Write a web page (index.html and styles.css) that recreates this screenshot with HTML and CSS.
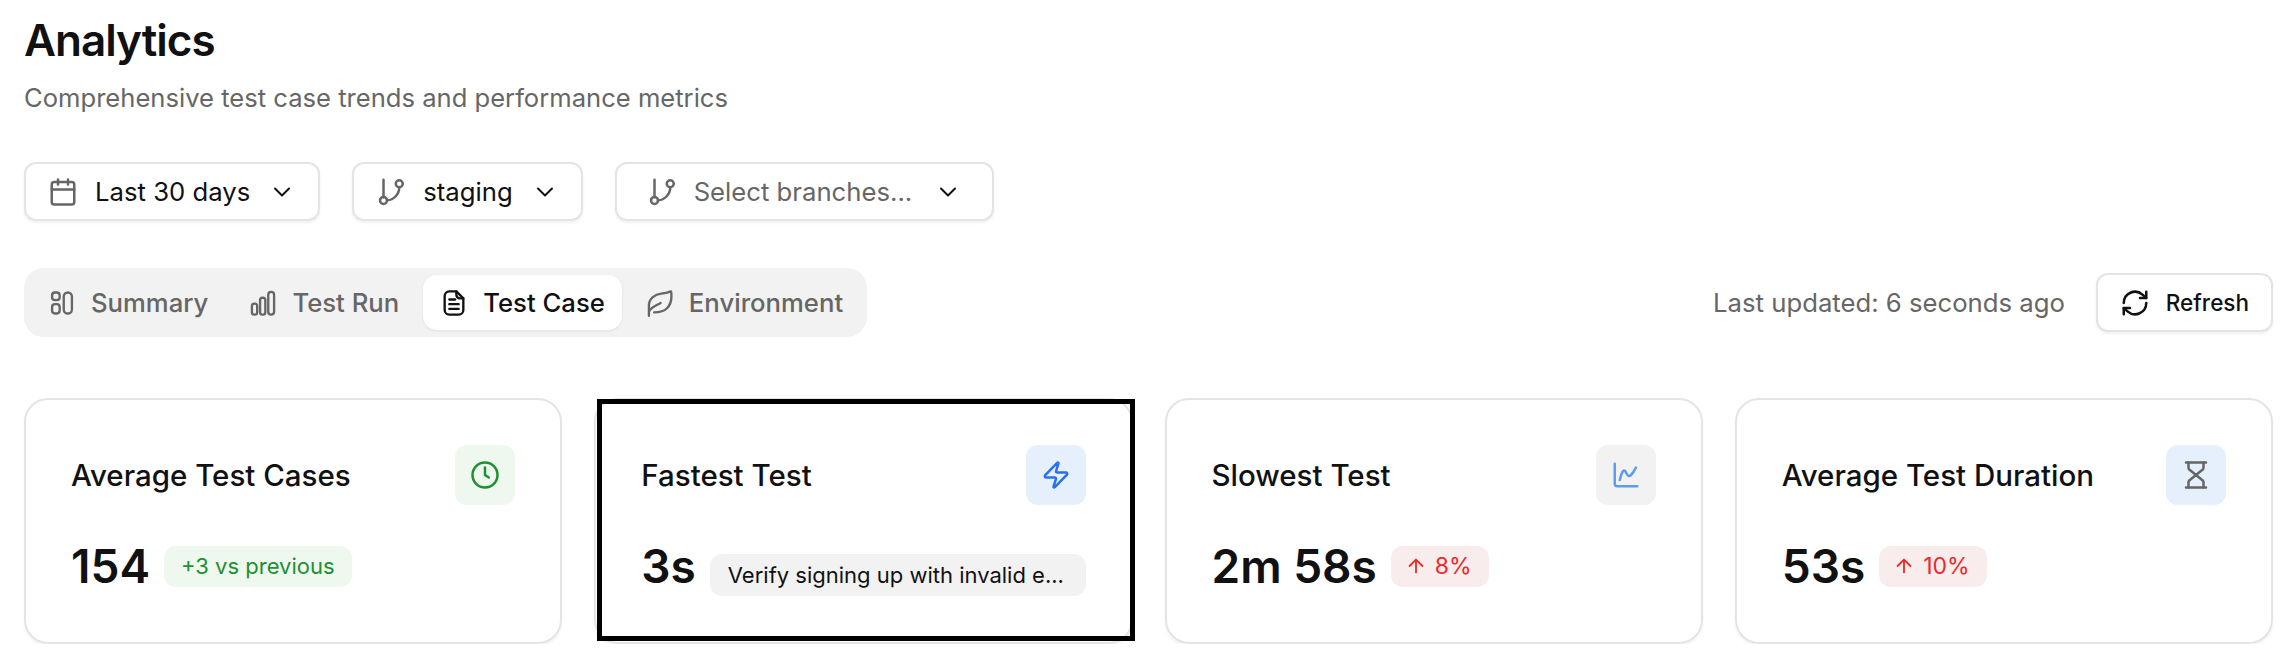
FILE: index.html
```html
<!DOCTYPE html>
<html lang="en">

<head>
  <meta charset="UTF-8">
  <meta name="viewport" content="width=device-width, initial-scale=1.0">
  <title>Analytics</title>
  <link rel="stylesheet" href="styles.css">
</head>

<body>
  <div class="page">
    <h1>Analytics</h1>
    <p class="subtitle">Comprehensive test case trends and performance metrics</p>

    <!-- Filters -->
    <div class="filters">
      <button class="dropdown">
        <svg class="icon muted" viewBox="0 0 24 24"><path d="M8 2v4M16 2v4"/><rect x="3" y="4" width="18" height="18" rx="2"/><path d="M3 10h18"/></svg>
        <span>Last 30 days</span>
        <svg class="chevron" viewBox="0 0 24 24"><path d="m5 8.500 7 7 7-7"/></svg>
      </button>
      <button class="dropdown">
        <svg class="icon muted" viewBox="0 0 24 24"><path d="M6 2.200v14"/><circle cx="6" cy="18.700" r="2.800"/><circle cx="18.600" cy="5.400" r="2.800"/><path d="M18.600 8.200a10.500 10.500 0 0 1-9.800 10.500"/></svg>
        <span>staging</span>
        <svg class="chevron" viewBox="0 0 24 24"><path d="m5 8.500 7 7 7-7"/></svg>
      </button>
      <button class="dropdown placeholder">
        <svg class="icon muted" viewBox="0 0 24 24"><path d="M6 2.200v14"/><circle cx="6" cy="18.700" r="2.800"/><circle cx="18.600" cy="5.400" r="2.800"/><path d="M18.600 8.200a10.500 10.500 0 0 1-9.800 10.500"/></svg>
        <span>Select branches...</span>
        <svg class="chevron" viewBox="0 0 24 24"><path d="m5 8.500 7 7 7-7"/></svg>
      </button>
    </div>

    <!-- Tabs -->
    <div class="toolbar">
      <div class="tabs">
        <div class="tab">
          <svg class="icon" viewBox="0 0 24 24"><rect x="3.500" y="3" width="6.500" height="6.500" rx="2.500"/><rect x="3.500" y="13" width="6.500" height="8" rx="2.500"/><rect x="13.500" y="3" width="7" height="18" rx="3.500"/></svg>
          Summary
        </div>
        <div class="tab">
          <svg class="icon" viewBox="0 0 24 24"><rect x="2.500" y="12.500" width="4.500" height="9.500" rx="2"/><rect x="9.500" y="7.500" width="4.500" height="14.500" rx="2"/><rect x="16.500" y="2.500" width="5" height="19.500" rx="2.500"/></svg>
          Test Run
        </div>
        <div class="tab active">
          <svg class="icon" viewBox="0 0 24 24"><path d="M14 2H8a4 4 0 0 0-4 4v12a4 4 0 0 0 4 4h8a4 4 0 0 0 4-4V8z"/><path d="M14 2v3a3 3 0 0 0 3 3h3M8 9h5M8 13h8M8 17h8"/></svg>
          Test Case
        </div>
        <div class="tab">
          <svg class="icon" viewBox="0 0 24 24"><path d="M2.500 23V14C2.500 8 8 4.500 13 4c3-.5 6-1 8.500-2 1 6.500-.5 11.500-3.500 14.500-3 3-7 3.500-11 3.500"/><path d="M3 18.500c2-3 6-4.500 9.500-6.500"/></svg>
          Environment
        </div>
      </div>
      <div class="update">
        <span class="updated">Last updated: 6 seconds ago</span>
        <button class="refresh">
          <svg class="icon dark" viewBox="0 0 24 24"><path d="M3 12a9 9 0 0 1 15-6.700L21 8"/><path d="M21 3v5h-5"/><path d="M21 12a9 9 0 0 1-15 6.700L3 16"/><path d="M8 16H3v5"/></svg>
          Refresh
        </button>
      </div>
    </div>

    <!-- Metric cards -->
    <div class="cards">
      <div class="card">
        <div class="card-head">
          <span class="card-title">Average Test Cases</span>
          <span class="tile green">
            <svg viewBox="0 0 24 24"><circle cx="12" cy="12" r="10"/><path d="M12 6v6l3 2"/></svg>
          </span>
        </div>
        <div class="card-value">
          <span class="value">154</span>
          <span class="badge good">+3 vs previous</span>
        </div>
      </div>

      <div class="card">
        <div class="card-head">
          <span class="card-title">Fastest Test</span>
          <span class="tile blue">
            <svg viewBox="0 0 24 24"><path d="M4 14a1 1 0 0 1-.78-1.630l9.900-10.200a.5.5 0 0 1 .86.46l-1.920 6.020A1 1 0 0 0 13 10h7a1 1 0 0 1 .78 1.630l-9.900 10.200a.5.5 0 0 1-.86-.46l1.920-6.020A1 1 0 0 0 11 14z"/></svg>
          </span>
        </div>
        <div class="card-value">
          <span class="value">3s</span>
          <span class="test-name">Verify signing up with invalid e...</span>
        </div>
        <div class="highlight"></div>
      </div>

      <div class="card">
        <div class="card-head">
          <span class="card-title">Slowest Test</span>
          <span class="tile gray">
            <svg class="light-blue" viewBox="0 0 24 24"><path d="M3 3v16a2 2 0 0 0 2 2h16"/><path d="M7 16c2-8 3.500-9 5-6s2.500 3.500 4 2 2.500-3 4-6"/></svg>
          </span>
        </div>
        <div class="card-value">
          <span class="value">2m 58s</span>
          <span class="badge bad">
            <svg viewBox="0 0 24 24"><path d="m5 12 7-7 7 7M12 19V5"/></svg>
            8%
          </span>
        </div>
      </div>

      <div class="card">
        <div class="card-head">
          <span class="card-title">Average Test Duration</span>
          <span class="tile blue">
            <svg class="gray-line" viewBox="0 0 24 24"><path d="M4 22h16M4 2h16"/><path d="M18 22v-4.200a2 2 0 0 0-.6-1.400L12 12l-5.400 4.400a2 2 0 0 0-.6 1.400V22"/><path d="M6 2v4.200a2 2 0 0 0 .6 1.400L12 12l5.400-4.400a2 2 0 0 0 .6-1.400V2"/></svg>
          </span>
        </div>
        <div class="card-value">
          <span class="value">53s</span>
          <span class="badge bad">
            <svg viewBox="0 0 24 24"><path d="m5 12 7-7 7 7M12 19V5"/></svg>
            10%
          </span>
        </div>
      </div>
    </div>
  </div>
</body>

</html>
```

FILE: styles.css
```css
* {
  box-sizing: border-box;
}

body {
  margin: 0;
  background: #fff;
  color: #111;
  font-family: Inter, "Liberation Sans", sans-serif;
}

svg {
  fill: none;
  stroke: currentColor;
  stroke-width: 2;
  stroke-linecap: round;
  stroke-linejoin: round;
  flex-shrink: 0;
}

.page {
  padding: 10px 23px 0 24px;
}

h1 {
  margin: 0;
  font-size: 44px;
  line-height: 60px;
  font-weight: 600;
  letter-spacing: -1px;
}

.subtitle {
  margin: 10px 0 0;
  font-size: 25.6px;
  line-height: 36px;
  color: #666;
}

.filters {
  display: flex;
  gap: 32px;
  margin-top: 46px;
}

.dropdown {
  display: flex;
  align-items: center;
  height: 59px;
  padding: 0 24px 0 22px;
  background: #fff;
  border: 2px solid #e4e4e4;
  border-radius: 12px;
  box-shadow: 0 2px 3px rgba(0, 0, 0, 0.06);
  font: inherit;
  font-size: 25.7px;
  color: #111;
}

.dropdown .icon {
  margin-right: 17px;
}

.dropdown .chevron {
  width: 24px;
  height: 24px;
  margin-left: 20px;
}

.placeholder {
  padding: 0 32px 0 30px;
  color: #666;
}

.placeholder .chevron {
  margin-left: 24px;
  color: #111;
}

.icon {
  width: 30px;
  height: 30px;
}

.muted {
  color: #666;
}

.toolbar {
  display: flex;
  justify-content: space-between;
  align-items: center;
  margin-top: 47px;
}

.tabs {
  display: flex;
  gap: 7px;
  height: 69px;
  padding: 7px;
  background: #f2f2f2;
  border-radius: 20px;
}

.tab {
  display: flex;
  align-items: center;
  gap: 15px;
  padding: 0 17px;
  border-radius: 14px;
  font-size: 25.7px;
  font-weight: 500;
  color: #666;
}

.tab .icon {
  width: 28px;
  height: 28px;
}

.tab.active {
  background: #fff;
  color: #111;
  box-shadow: 0 1px 3px rgba(0, 0, 0, 0.08);
}

.update {
  display: flex;
  align-items: center;
  gap: 31px;
}

.updated {
  font-size: 25.7px;
  color: #666;
}

.refresh {
  display: flex;
  align-items: center;
  gap: 16px;
  height: 59px;
  padding: 0 22px;
  background: #fff;
  border: 2px solid #e4e4e4;
  border-radius: 12px;
  box-shadow: 0 2px 3px rgba(0, 0, 0, 0.06);
  font: inherit;
  font-size: 22.500px;
  font-weight: 500;
  color: #111;
}

.cards {
  display: grid;
  grid-template-columns: repeat(4, minmax(0, 1fr));
  gap: 32px;
  margin-top: 61px;
}

.card {
  position: relative;
  height: 246px;
  padding: 45px 45px 0 45px;
  border: 2px solid #e4e4e4;
  border-radius: 24px;
  box-shadow: 0 2px 3px rgba(0, 0, 0, 0.05);
}

.card-head {
  display: flex;
  justify-content: space-between;
  align-items: center;
  height: 60px;
}

.card-title {
  font-size: 29.5px;
  font-weight: 500;
}

.tile {
  display: flex;
  align-items: center;
  justify-content: center;
  width: 60px;
  height: 60px;
  border-radius: 12px;
}

.tile svg {
  width: 30px;
  height: 30px;
}

.green {
  background: #eef8ef;
  color: #1f8f2f;
}

.blue {
  background: #e6f0fc;
  color: #2a6ff0;
}

.gray {
  background: #f2f2f2;
}

.light-blue {
  color: #5b9bf5;
}

.gray-line {
  color: #666;
}

.card-value {
  display: flex;
  align-items: center;
  gap: 14px;
  height: 60px;
  margin-top: 31px;
}

.value {
  font-size: 46px;
  line-height: 60px;
  font-weight: 600;
  white-space: nowrap;
}

.badge {
  display: flex;
  align-items: center;
  gap: 8px;
  height: 41px;
  padding: 0 17px 0 14px;
  border-radius: 12px;
  font-size: 23px;
  white-space: nowrap;
}

.badge svg {
  width: 22px;
  height: 22px;
}

.good {
  padding: 0 17px;
  background: #eef8ef;
  color: #1f8f2f;
  font-size: 22px;
}

.bad {
  background: #f9ecec;
  color: #e92a2a;
}

.test-name {
  flex: 1;
  min-width: 0;
  align-self: flex-end;
  height: 42px;
  padding: 0 16px 0 18px;
  background: #f2f2f2;
  border-radius: 12px;
  font-size: 22px;
  line-height: 42px;
  white-space: nowrap;
}

/* black frame lying over the second card */
.highlight {
  position: absolute;
  top: -1px;
  left: 1px;
  right: -4px;
  bottom: 1px;
  border: 5px solid #000;
}
```
